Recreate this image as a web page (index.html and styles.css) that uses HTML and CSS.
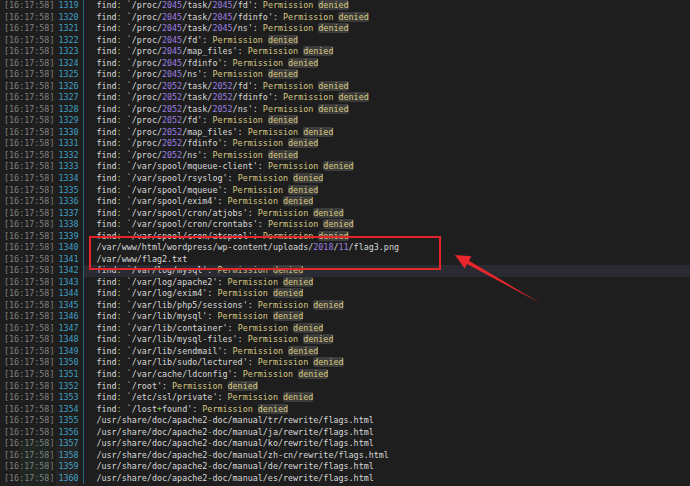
FILE: index.html
```html
<!DOCTYPE html>
<html lang="en">
<head>
    <meta charset="UTF-8">
    <title>find output</title>
    <link rel="stylesheet" href="styles.css">
</head>
<body>

<div class="terminal">
    <div class="row"><span class="ts">[16:17:58]</span><span class="ln">1319</span><span class="code">find<span class="c">:</span> `/proc/<span class="n">2045</span>/task/<span class="n">2045</span>/fd': <span class="p">Permission</span> <span class="d">denied</span></span></div>
    <div class="row"><span class="ts">[16:17:58]</span><span class="ln">1320</span><span class="code">find<span class="c">:</span> `/proc/<span class="n">2045</span>/task/<span class="n">2045</span>/fdinfo': <span class="p">Permission</span> <span class="d">denied</span></span></div>
    <div class="row"><span class="ts">[16:17:58]</span><span class="ln">1321</span><span class="code">find<span class="c">:</span> `/proc/<span class="n">2045</span>/task/<span class="n">2045</span>/ns': <span class="p">Permission</span> <span class="d">denied</span></span></div>
    <div class="row"><span class="ts">[16:17:58]</span><span class="ln">1322</span><span class="code">find<span class="c">:</span> `/proc/<span class="n">2045</span>/fd': <span class="p">Permission</span> <span class="d">denied</span></span></div>
    <div class="row"><span class="ts">[16:17:58]</span><span class="ln">1323</span><span class="code">find<span class="c">:</span> `/proc/<span class="n">2045</span>/map_files': <span class="p">Permission</span> <span class="d">denied</span></span></div>
    <div class="row"><span class="ts">[16:17:58]</span><span class="ln">1324</span><span class="code">find<span class="c">:</span> `/proc/<span class="n">2045</span>/fdinfo': <span class="p">Permission</span> <span class="d">denied</span></span></div>
    <div class="row"><span class="ts">[16:17:58]</span><span class="ln">1325</span><span class="code">find<span class="c">:</span> `/proc/<span class="n">2045</span>/ns': <span class="p">Permission</span> <span class="d">denied</span></span></div>
    <div class="row"><span class="ts">[16:17:58]</span><span class="ln">1326</span><span class="code">find<span class="c">:</span> `/proc/<span class="n">2052</span>/task/<span class="n">2052</span>/fd': <span class="p">Permission</span> <span class="d">denied</span></span></div>
    <div class="row"><span class="ts">[16:17:58]</span><span class="ln">1327</span><span class="code">find<span class="c">:</span> `/proc/<span class="n">2052</span>/task/<span class="n">2052</span>/fdinfo': <span class="p">Permission</span> <span class="d">denied</span></span></div>
    <div class="row"><span class="ts">[16:17:58]</span><span class="ln">1328</span><span class="code">find<span class="c">:</span> `/proc/<span class="n">2052</span>/task/<span class="n">2052</span>/ns': <span class="p">Permission</span> <span class="d">denied</span></span></div>
    <div class="row"><span class="ts">[16:17:58]</span><span class="ln">1329</span><span class="code">find<span class="c">:</span> `/proc/<span class="n">2052</span>/fd': <span class="p">Permission</span> <span class="d">denied</span></span></div>
    <div class="row"><span class="ts">[16:17:58]</span><span class="ln">1330</span><span class="code">find<span class="c">:</span> `/proc/<span class="n">2052</span>/map_files': <span class="p">Permission</span> <span class="d">denied</span></span></div>
    <div class="row"><span class="ts">[16:17:58]</span><span class="ln">1331</span><span class="code">find<span class="c">:</span> `/proc/<span class="n">2052</span>/fdinfo': <span class="p">Permission</span> <span class="d">denied</span></span></div>
    <div class="row"><span class="ts">[16:17:58]</span><span class="ln">1332</span><span class="code">find<span class="c">:</span> `/proc/<span class="n">2052</span>/ns': <span class="p">Permission</span> <span class="d">denied</span></span></div>
    <div class="row"><span class="ts">[16:17:58]</span><span class="ln">1333</span><span class="code">find<span class="c">:</span> `/var/spool/mqueue-client': <span class="p">Permission</span> <span class="d">denied</span></span></div>
    <div class="row"><span class="ts">[16:17:58]</span><span class="ln">1334</span><span class="code">find<span class="c">:</span> `/var/spool/rsyslog': <span class="p">Permission</span> <span class="d">denied</span></span></div>
    <div class="row"><span class="ts">[16:17:58]</span><span class="ln">1335</span><span class="code">find<span class="c">:</span> `/var/spool/mqueue': <span class="p">Permission</span> <span class="d">denied</span></span></div>
    <div class="row"><span class="ts">[16:17:58]</span><span class="ln">1336</span><span class="code">find<span class="c">:</span> `/var/spool/exim4': <span class="p">Permission</span> <span class="d">denied</span></span></div>
    <div class="row"><span class="ts">[16:17:58]</span><span class="ln">1337</span><span class="code">find<span class="c">:</span> `/var/spool/cron/atjobs': <span class="p">Permission</span> <span class="d">denied</span></span></div>
    <div class="row"><span class="ts">[16:17:58]</span><span class="ln">1338</span><span class="code">find<span class="c">:</span> `/var/spool/cron/crontabs': <span class="p">Permission</span> <span class="d">denied</span></span></div>
    <div class="row"><span class="ts">[16:17:58]</span><span class="ln">1339</span><span class="code">find<span class="c">:</span> `/var/spool/cron/atspool': <span class="p">Permission</span> <span class="d">denied</span></span></div>
    <div class="row"><span class="ts">[16:17:58]</span><span class="ln">1340</span><span class="code">/var/www/html/wordpress/wp-content/uploads/<span class="n">2018</span>/<span class="n">11</span>/flag3.png</span></div>
    <div class="row"><span class="ts">[16:17:58]</span><span class="ln">1341</span><span class="code">/var/www/flag2.txt</span></div>
    <div class="row current"><span class="ts">[16:17:58]</span><span class="ln">1342</span><span class="code">find<span class="c">:</span> `/var/log/mysql': <span class="p">Permission</span> <span class="d">denied</span></span></div>
    <div class="row"><span class="ts">[16:17:58]</span><span class="ln">1343</span><span class="code">find<span class="c">:</span> `/var/log/apache2': <span class="p">Permission</span> <span class="d">denied</span></span></div>
    <div class="row"><span class="ts">[16:17:58]</span><span class="ln">1344</span><span class="code">find<span class="c">:</span> `/var/log/exim4': <span class="p">Permission</span> <span class="d">denied</span></span></div>
    <div class="row"><span class="ts">[16:17:58]</span><span class="ln">1345</span><span class="code">find<span class="c">:</span> `/var/lib/php5/sessions': <span class="p">Permission</span> <span class="d">denied</span></span></div>
    <div class="row"><span class="ts">[16:17:58]</span><span class="ln">1346</span><span class="code">find<span class="c">:</span> `/var/lib/mysql': <span class="p">Permission</span> <span class="d">denied</span></span></div>
    <div class="row"><span class="ts">[16:17:58]</span><span class="ln">1347</span><span class="code">find<span class="c">:</span> `/var/lib/container': <span class="p">Permission</span> <span class="d">denied</span></span></div>
    <div class="row"><span class="ts">[16:17:58]</span><span class="ln">1348</span><span class="code">find<span class="c">:</span> `/var/lib/mysql-files': <span class="p">Permission</span> <span class="d">denied</span></span></div>
    <div class="row"><span class="ts">[16:17:58]</span><span class="ln">1349</span><span class="code">find<span class="c">:</span> `/var/lib/sendmail': <span class="p">Permission</span> <span class="d">denied</span></span></div>
    <div class="row"><span class="ts">[16:17:58]</span><span class="ln">1350</span><span class="code">find<span class="c">:</span> `/var/lib/sudo/lectured': <span class="p">Permission</span> <span class="d">denied</span></span></div>
    <div class="row"><span class="ts">[16:17:58]</span><span class="ln">1351</span><span class="code">find<span class="c">:</span> `/var/cache/ldconfig': <span class="p">Permission</span> <span class="d">denied</span></span></div>
    <div class="row"><span class="ts">[16:17:58]</span><span class="ln">1352</span><span class="code">find<span class="c">:</span> `/root': <span class="p">Permission</span> <span class="d">denied</span></span></div>
    <div class="row"><span class="ts">[16:17:58]</span><span class="ln">1353</span><span class="code">find<span class="c">:</span> `/etc/ssl/private': <span class="p">Permission</span> <span class="d">denied</span></span></div>
    <div class="row"><span class="ts">[16:17:58]</span><span class="ln">1354</span><span class="code">find<span class="c">:</span> `/lost<span class="g">+</span>found': <span class="p">Permission</span> <span class="d">denied</span></span></div>
    <div class="row"><span class="ts">[16:17:58]</span><span class="ln">1355</span><span class="code">/usr/share/doc/apache2<span class="g">-</span>doc/manual/tr/rewrite/flags.html</span></div>
    <div class="row"><span class="ts">[16:17:58]</span><span class="ln">1356</span><span class="code">/usr/share/doc/apache2<span class="g">-</span>doc/manual/ja/rewrite/flags.html</span></div>
    <div class="row"><span class="ts">[16:17:58]</span><span class="ln">1357</span><span class="code">/usr/share/doc/apache2<span class="g">-</span>doc/manual/ko/rewrite/flags.html</span></div>
    <div class="row"><span class="ts">[16:17:58]</span><span class="ln">1358</span><span class="code">/usr/share/doc/apache2<span class="g">-</span>doc/manual/zh-cn/rewrite/flags.html</span></div>
    <div class="row"><span class="ts">[16:17:58]</span><span class="ln">1359</span><span class="code">/usr/share/doc/apache2<span class="g">-</span>doc/manual/de/rewrite/flags.html</span></div>
    <div class="row"><span class="ts">[16:17:58]</span><span class="ln">1360</span><span class="code">/usr/share/doc/apache2<span class="g">-</span>doc/manual/es/rewrite/flags.html</span></div>

    <div class="mark-box"></div>
    <svg class="mark-arrow" width="690" height="486" viewBox="0 0 690 486">
        <polygon points="455,255 471.4,256.3 469,260.7 540.8,303.4 467,264.1 464.6,268.5" fill="#e8262b"/>
    </svg>
    <div class="watermark"><span class="wm-block"></span><span class="wm-block small"></span></div>
</div>

</body>
</html>
```

FILE: styles.css
```css
body {
    margin: 0;
    padding: 0;
    background-color: #1e1e1e;
    overflow: hidden;
}

.terminal {
    position: relative;
    width: 690px;
    height: 486px;
    font-family: "DejaVu Sans Mono", "Liberation Mono", monospace;
    font-size: 8.4px;
    line-height: 11.53px;
    color: #d8d8d8;
}

.row {
    display: flex;
    white-space: pre;
}

.ts {
    padding-left: 4px;
    color: #808080;
}

.ln {
    width: 25px;
    padding-left: 4px;
    color: #3e9fc4;
}

.code {
    flex: 1;
    border-left: 1.5px solid #266580;
    padding-left: 12px;
}

.current .code {
    background-color: #2a2a32;
}

.c { color: #b6c94c; }
.n { color: #9b7de0; }
.g { color: #8fcf5a; }
.p { color: #d5c683; }

.d {
    color: #d9c97f;
    background-color: #3c3c3c;
    border-radius: 2px;
}

.mark-box {
    position: absolute;
    left: 89px;
    top: 236px;
    width: 348px;
    height: 30px;
    border: 2px solid #e3262a;
}

.mark-arrow {
    position: absolute;
    left: 0;
    top: 0;
}

/* faint logo mark, bottom left */
.watermark {
    position: absolute;
    left: 20px;
    top: 440px;
    display: flex;
    gap: 6px;
    pointer-events: none;
}

.wm-block {
    width: 30px;
    height: 46px;
    background-color: rgba(70, 140, 95, 0.08);
}

.wm-block.small {
    width: 22px;
    background-color: rgba(200, 200, 200, 0.04);
}
```
